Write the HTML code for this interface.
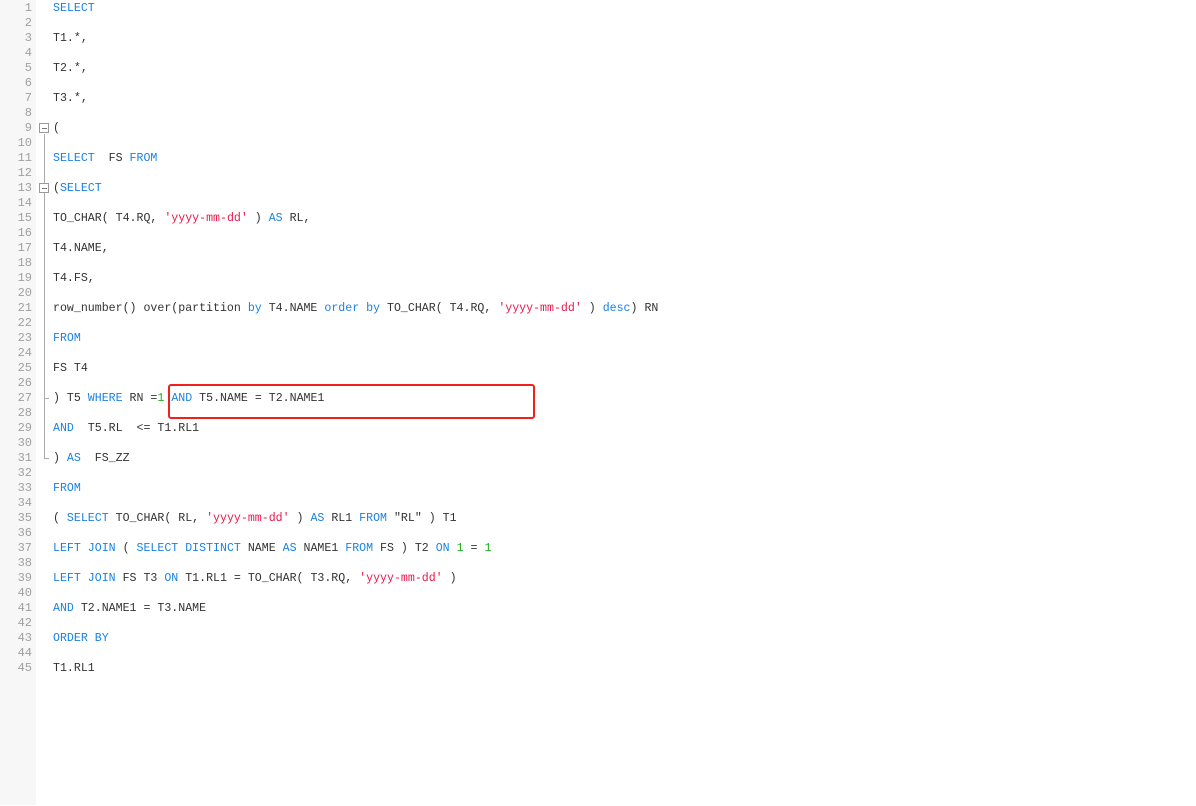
<!DOCTYPE html>
<html><head><meta charset="utf-8"><style>
html,body{margin:0;padding:0;background:#fff;width:1196px;height:805px;overflow:hidden}
.g{position:absolute;left:0;top:0;width:36px;height:805px;background:#f7f7f7}
.n{position:absolute;left:0;width:32px;text-align:right;font:12px "Liberation Mono",monospace;color:#a0a0a0;line-height:15px}
.c{position:absolute;left:53px;font:11.6px "Liberation Mono",monospace;color:#333;line-height:15px;white-space:pre}
.k{color:#1a82e2}.s{color:#e8194b}.d{color:#22b022}
.fb{position:absolute;left:39px;width:8px;height:8px;border:1px solid #999;background:#fff}
.fb:after{content:"";position:absolute;left:2px;top:4px;width:5px;height:1px;background:#777}
.vl{position:absolute;left:44px;width:1px;background:#aaa}
.box{position:absolute;left:168px;top:384px;width:363px;height:31px;border:2px solid #f0211b;border-radius:3px}
#w{position:absolute;left:0;top:1px;width:1196px;height:805px}
</style></head><body>
<div class="g"></div>
<div id="w">
<div class="vl" style="top:133px;height:265px"></div>
<div class="vl" style="top:398px;height:60px"></div>
<div class="vl" style="top:397px;height:1px;width:5px;"></div>
<div class="vl" style="top:457px;height:1px;width:5px;"></div>
<div class="fb" style="top:122px"></div>
<div class="fb" style="top:182px"></div>
<div class="c" style="top:0px"><span class="k">SELECT</span></div>
<div class="c" style="top:30px">T1.*,</div>
<div class="c" style="top:60px">T2.*,</div>
<div class="c" style="top:90px">T3.*,</div>
<div class="c" style="top:120px">(</div>
<div class="c" style="top:150px"><span class="k">SELECT</span>  FS <span class="k">FROM</span></div>
<div class="c" style="top:180px">(<span class="k">SELECT</span></div>
<div class="c" style="top:210px">TO_CHAR( T4.RQ, <span class="s">'yyyy-mm-dd'</span> ) <span class="k">AS</span> RL,</div>
<div class="c" style="top:240px">T4.NAME,</div>
<div class="c" style="top:270px">T4.FS,</div>
<div class="c" style="top:300px">row_number() over(partition <span class="k">by</span> T4.NAME <span class="k">order by</span> TO_CHAR( T4.RQ, <span class="s">'yyyy-mm-dd'</span> ) <span class="k">desc</span>) RN</div>
<div class="c" style="top:330px"><span class="k">FROM</span></div>
<div class="c" style="top:360px">FS T4</div>
<div class="c" style="top:390px">) T5 <span class="k">WHERE</span> RN =<span class="d">1</span> <span class="k">AND</span> T5.NAME = T2.NAME1</div>
<div class="c" style="top:420px"><span class="k">AND</span>  T5.RL  &lt;= T1.RL1</div>
<div class="c" style="top:450px">) <span class="k">AS</span>  FS_ZZ</div>
<div class="c" style="top:480px"><span class="k">FROM</span></div>
<div class="c" style="top:510px">( <span class="k">SELECT</span> TO_CHAR( RL, <span class="s">'yyyy-mm-dd'</span> ) <span class="k">AS</span> RL1 <span class="k">FROM</span> "RL" ) T1</div>
<div class="c" style="top:540px"><span class="k">LEFT JOIN</span> ( <span class="k">SELECT DISTINCT</span> NAME <span class="k">AS</span> NAME1 <span class="k">FROM</span> FS ) T2 <span class="k">ON</span> <span class="d">1</span> = <span class="d">1</span></div>
<div class="c" style="top:570px"><span class="k">LEFT JOIN</span> FS T3 <span class="k">ON</span> T1.RL1 = TO_CHAR( T3.RQ, <span class="s">'yyyy-mm-dd'</span> )</div>
<div class="c" style="top:600px"><span class="k">AND</span> T2.NAME1 = T3.NAME</div>
<div class="c" style="top:630px"><span class="k">ORDER BY</span></div>
<div class="c" style="top:660px">T1.RL1</div>
<div class="n" style="top:0">1<br>2<br>3<br>4<br>5<br>6<br>7<br>8<br>9<br>10<br>11<br>12<br>13<br>14<br>15<br>16<br>17<br>18<br>19<br>20<br>21<br>22<br>23<br>24<br>25<br>26<br>27<br>28<br>29<br>30<br>31<br>32<br>33<br>34<br>35<br>36<br>37<br>38<br>39<br>40<br>41<br>42<br>43<br>44<br>45</div>
</div>
<div class="box"></div>
</body></html>
